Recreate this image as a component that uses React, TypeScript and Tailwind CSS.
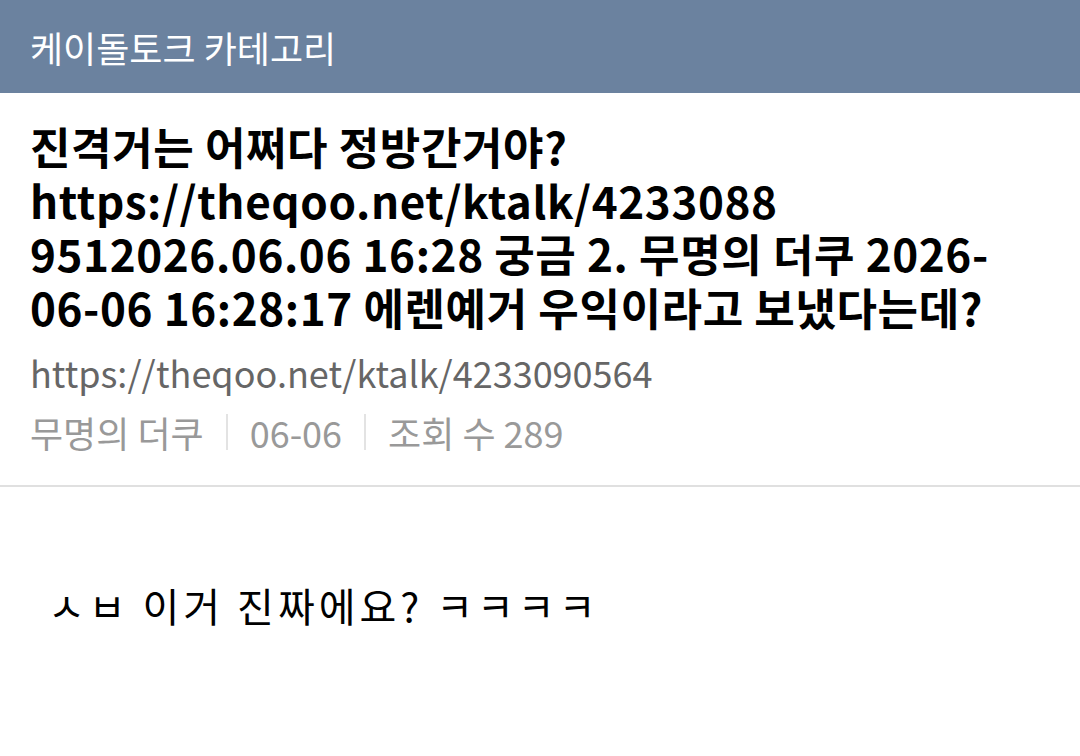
export default function App() {
  const font = { fontFamily: '"Noto Sans CJK KR", "Noto Sans", sans-serif' };
  return (
    <div className="w-[1080px] h-[756px] bg-white" style={font}>
      <div className="h-[93px] bg-[#6b829f] flex items-center px-[30px]">
        <span className="text-[36px] text-white leading-none">케이돌토크 카테고리</span>
      </div>

      <div className="px-[30px] pt-[27px]">
        <h1 className="text-[44px] font-bold leading-[53.5px] text-black tracking-[0.6px]">
          진격거는 어쩌다 정방간거야?
          <br />
          https://theqoo.net/ktalk/4233088
          <br />
          9512026.06.06 16:28 궁금 2. 무명의 더쿠 2026-
          <br />
          06-06 16:28:17 에렌예거 우익이라고 보냈다는데?
        </h1>
        <div className="mt-[16px] text-[36px] leading-[44px] text-[#666]">
          https://theqoo.net/ktalk/4233090564
        </div>
        <div className="mt-[16px] flex items-center text-[36px] leading-[44px] text-[#999]">
          <span>무명의 더쿠</span>
          <span className="mx-[22px] h-[36px] w-[2px] bg-[#e3e3e3]" />
          <span>06-06</span>
          <span className="mx-[22px] h-[36px] w-[2px] bg-[#e3e3e3]" />
          <span>조회 수 289</span>
        </div>
      </div>

      <div className="mt-[31px] h-[2px] bg-[#e0e0e0]" />

      <div className="px-[48px] pt-[96px]">
        <p className="text-[40px] leading-[44px] text-black tracking-[4px]">ㅅㅂ 이거 진짜에요? ㅋㅋㅋㅋ</p>
      </div>
    </div>
  );
}
